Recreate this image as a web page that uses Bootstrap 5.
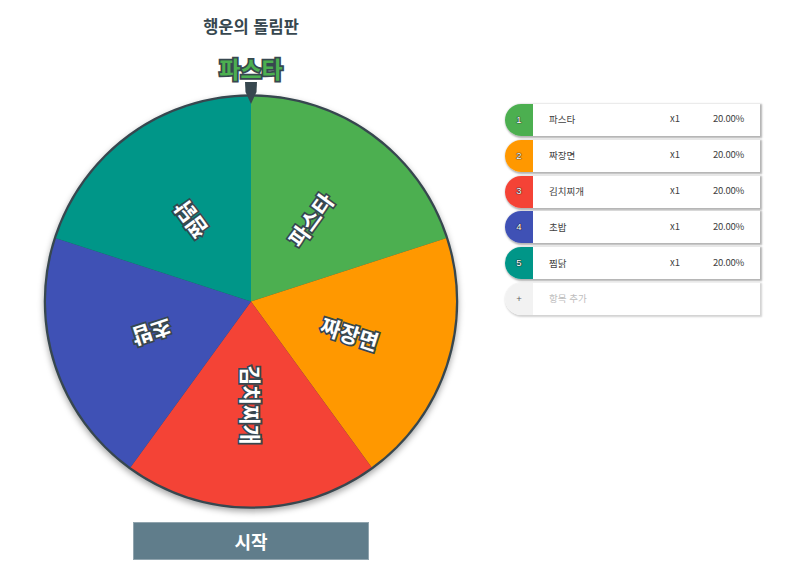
<!DOCTYPE html>
<html lang="ko"><head><meta charset="utf-8"><title>행운의 돌림판</title>
<link href="https://cdn.jsdelivr.net/npm/bootstrap@5.3.0/dist/css/bootstrap.min.css" rel="stylesheet">
<style>
html,body{height:100%;overflow:hidden;background:#fff;font-family:"Noto Sans CJK KR","Noto Sans",sans-serif}
.stage{width:800px;height:574px}
.wheel-col{width:502px}
.wheel-title{height:54px;padding-top:14px;font-size:16.5px;line-height:24px;font-weight:700;color:#37474f;margin:0}
.wheel-svg{display:block;width:502px;height:462px;overflow:visible}
.wheel-disc{filter:drop-shadow(0 3px 3px rgba(0,0,0,.35))}
.slice-label{font-size:21.5px;font-weight:700;fill:#fff;stroke:#37474f;stroke-width:3.5px;paint-order:stroke;text-anchor:middle;dominant-baseline:central;stroke-linejoin:miter}
.win-label{font-size:23px;font-weight:700;fill:#4caf50;stroke:#37474f;stroke-width:3.5px;paint-order:stroke;text-anchor:middle;dominant-baseline:central}
.start-btn{display:block;width:236px;height:38px;margin:6px 0 0 133px;background:#607d8b;border:1px solid #90a4ae;border-radius:0;color:#fff;font-size:18px;font-weight:700;line-height:34px;padding:0}
.rows{width:255px;margin:104px 0 0 3px;gap:3.8px}
.row-item{height:32px;background:#fff;box-shadow:1px 1px 2px 1px rgba(0,0,0,.3);border-radius:16px 0 0 16px;font-size:9.5px;color:#424242}
.row-num{width:28px;height:32px;border-radius:16px 0 0 16px;color:#fff;text-shadow:0 0 1px #212121,0 0 1px #212121,0 0 1px #212121;font-family:"Liberation Sans",sans-serif}
.row-name{margin-left:16px;width:121px;margin-top:-1px}
.row-mult{width:43px;margin-top:-3px}
.row-pct{width:30px;letter-spacing:-.25px;margin-top:-3px;white-space:nowrap}
.row-add{box-shadow:1px 1px 2px 1px rgba(0,0,0,.18)}
.row-add .row-num{background:#f2f2f2;color:#616161;text-shadow:none}
.row-add .row-name{color:#bdbdbd}
.c1{background:#4caf50}.c2{background:#ff9800}.c3{background:#f44336}.c4{background:#3f51b5}.c5{background:#009688}
</style></head>
<body>
<div class="stage d-flex">
 <div class="wheel-col">
  <h1 class="wheel-title text-center">행운의 돌림판</h1>
  <svg class="wheel-svg" viewBox="0 54 502 462" xmlns="http://www.w3.org/2000/svg">
   <g class="wheel-disc">
    <circle cx="251" cy="301.500" r="206" fill="#37474f" stroke="#37474f" stroke-width="2.500"/>
    <path d="M251 301.500L251 96.500A205 205 0 0 1 446 238.200Z" fill="#4caf50"/>
    <path d="M251 301.500L446 238.200A205 205 0 0 1 371.500 467.300Z" fill="#ff9800"/>
    <path d="M251 301.500L371.500 467.300A205 205 0 0 1 130.500 467.300Z" fill="#f44336"/>
    <path d="M251 301.500L130.500 467.300A205 205 0 0 1 56 238.200Z" fill="#3f51b5"/>
    <path d="M251 301.500L56 238.200A205 205 0 0 1 251 96.500Z" fill="#009688"/>
   </g>
   <text class="slice-label" transform="translate(310 219.500) rotate(-54)">파스타</text>
   <text class="slice-label" transform="translate(350 333) rotate(18)">짜장면</text>
   <text class="slice-label" transform="translate(251 405) rotate(90)">김치찌개</text>
   <text class="slice-label" transform="translate(152 333) rotate(162)">초밥</text>
   <text class="slice-label" transform="translate(190 220) rotate(234)">찜닭</text>
   <path d="M245 82H257L256.500 92L251 104L245.500 92Z" fill="#37474f"/>
   <text class="win-label" x="251" y="68">파스타</text>
  </svg>
  <button type="button" class="btn start-btn">시작</button>
 </div>
 <div class="rows d-flex flex-column">
  <div class="row-item d-flex align-items-center"><span class="row-num c1 d-flex align-items-center justify-content-center">1</span><span class="row-name">파스타</span><span class="row-mult">x1</span><span class="row-pct">20.00%</span></div>
  <div class="row-item d-flex align-items-center"><span class="row-num c2 d-flex align-items-center justify-content-center">2</span><span class="row-name">짜장면</span><span class="row-mult">x1</span><span class="row-pct">20.00%</span></div>
  <div class="row-item d-flex align-items-center"><span class="row-num c3 d-flex align-items-center justify-content-center">3</span><span class="row-name">김치찌개</span><span class="row-mult">x1</span><span class="row-pct">20.00%</span></div>
  <div class="row-item d-flex align-items-center"><span class="row-num c4 d-flex align-items-center justify-content-center">4</span><span class="row-name">초밥</span><span class="row-mult">x1</span><span class="row-pct">20.00%</span></div>
  <div class="row-item d-flex align-items-center"><span class="row-num c5 d-flex align-items-center justify-content-center">5</span><span class="row-name">찜닭</span><span class="row-mult">x1</span><span class="row-pct">20.00%</span></div>
  <div class="row-item row-add d-flex align-items-center"><span class="row-num d-flex align-items-center justify-content-center">+</span><span class="row-name">항목 추가</span></div>
 </div>
</div>
<script src="https://cdn.jsdelivr.net/npm/bootstrap@5.3.0/dist/js/bootstrap.bundle.min.js"></script>
</body></html>
